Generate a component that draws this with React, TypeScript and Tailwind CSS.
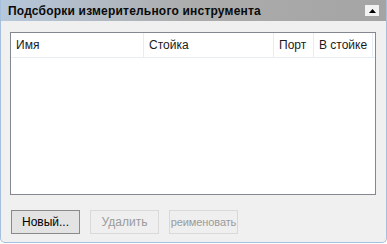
import React from 'react';

const columns = [
  { title: 'Имя', width: 'w-[133px]' },
  { title: 'Стойка', width: 'w-[130px]' },
  { title: 'Порт', width: 'w-[40px]' },
  { title: 'В стойке', width: 'w-[59px]' },
];

const App: React.FC = () => {
  return (
    <div className="w-[387px] h-[244px] bg-white font-['Liberation_Sans',Arial,sans-serif]">
      <div className="w-[387px] h-[243px] flex flex-col border border-t-0 border-[#a6bfdc] rounded-b-[5px] bg-[#f0f0f0]">
        {/* title bar */}
        <div className="h-[21px] flex items-center justify-between pl-[7px] pr-[7px] bg-gradient-to-r from-[#b6c8dc] via-[#acacac] to-[#a4a4a4]">
          <span className="text-[12px] font-bold text-[#0a0a0a] leading-none tracking-[0.2px]">
            Подсборки измерительного инструмента
          </span>
          <div className="w-[14px] h-[11px] bg-[#f2f2f2] flex items-center justify-center">
            <svg width="7" height="4" viewBox="0 0 7 4">
              <polygon points="3.5,0 7,4 0,4" fill="#000" />
            </svg>
          </div>
        </div>

        {/* table */}
        <div className="mt-[11px] ml-[9px] w-[366px] h-[163px] border border-[#828790] bg-white">
          <div className="flex h-[25px] border-b border-[#e6edf5]">
            {columns.map((c) => (
              <div
                key={c.title}
                className={`${c.width} h-full flex items-center pl-[5px] border-r border-[#e6edf5] text-[12px] text-[#1a1a1a]`}
              >
                {c.title}
              </div>
            ))}
          </div>
        </div>

        {/* buttons */}
        <div className="flex gap-[10px] ml-[10px] mt-[15px]">
          <button className="w-[69px] h-[24px] border border-[#8a8a8a] bg-[#e3e3e3] text-[12px] text-[#000]">
            Новый...
          </button>
          <button className="w-[69px] h-[24px] border border-[#d9d9d9] bg-[#efefef] text-[12px] text-[#9b9b9b]">
            Удалить
          </button>
          <button className="w-[69px] h-[24px] border border-[#d9d9d9] bg-[#efefef] text-[11px] text-[#9b9b9b] whitespace-nowrap flex items-center justify-center px-0 tracking-[-0.1px]">
            реименовать
          </button>
        </div>
      </div>
    </div>
  );
};

export default App;
